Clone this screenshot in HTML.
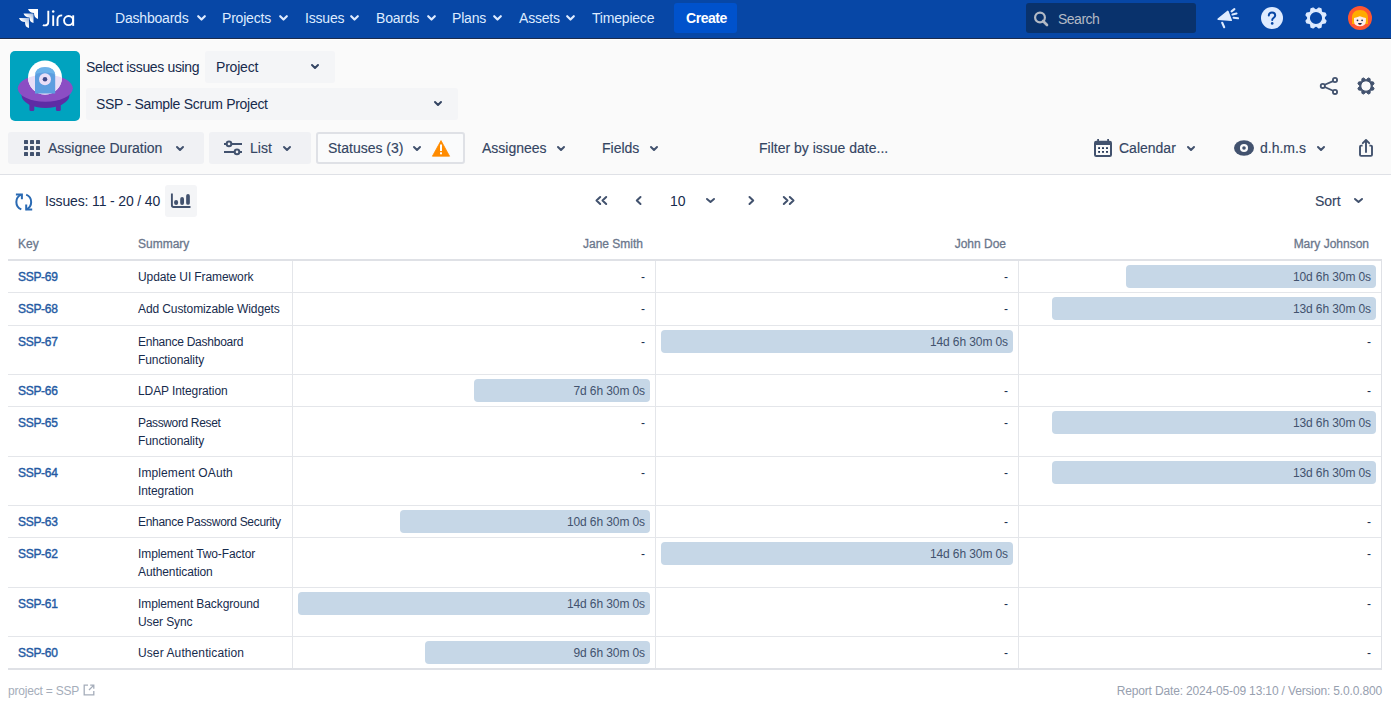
<!DOCTYPE html>
<html><head><meta charset="utf-8">
<style>
*{box-sizing:border-box;margin:0;padding:0}
html,body{width:1391px;height:704px;overflow:hidden;background:#fff;font-family:"Liberation Sans",sans-serif;color:#172b4d}
.a{position:absolute;white-space:nowrap}
#nav{position:absolute;left:0;top:0;width:1391px;height:38px;background:#0747a6}
#navline{position:absolute;left:0;top:38px;width:1391px;height:1px;background:#1d2c4c}
#hdr{position:absolute;left:0;top:39px;width:1391px;height:135px;background:#fafafa;border-top:1px solid #fff}
#tbline{position:absolute;left:0;top:174px;width:1391px;height:1px;background:#dfe1e6}
.nt{font-size:14px;color:#deebff;line-height:16px;letter-spacing:-0.2px}
.chev{position:absolute}
.btn{position:absolute;background:#f0f1f4;border-radius:3px}
.bt{font-size:14px;color:#344563;line-height:16px;-webkit-text-stroke:0.15px #344563}
svg{position:absolute;overflow:visible}
.th{font-size:12px;line-height:16px;color:#6b778c;-webkit-text-stroke:0.3px #6b778c}
.tk{font-size:12px;line-height:17px;color:#245aa3;letter-spacing:-0.3px;-webkit-text-stroke:0.4px #245aa3}
.ts{font-size:12px;line-height:17.5px;color:#172b4d;letter-spacing:-0.1px;white-space:nowrap}
.td{font-size:12px;line-height:17px;color:#172b4d}
.tb{font-size:12px;line-height:17px;color:#42526e;letter-spacing:-0.1px}
.bar{height:23px;background:#c6d7e7;border-radius:4px}
.tf{font-size:12px;line-height:16px;color:#a5adba;letter-spacing:-0.2px}
</style></head><body>
<div id="nav"></div>
<div id="navline"></div>
<div id="hdr"></div>
<div id="tbline"></div>

<!-- NAV -->
<svg style="left:18px;top:8px" width="21" height="21" viewBox="0 0 21 21">
  <defs>
    <linearGradient id="lg1" x1="1" y1="0" x2="0" y2="1"><stop offset="0" stop-color="#fff" stop-opacity=".55"/><stop offset=".5" stop-color="#fff"/></linearGradient>
  </defs>
  <path d="M10 1 H20 V11 C17 10 16 8 16 5 C13 5 11 3.5 10 1Z" fill="#fff"/>
  <path d="M5.5 5.5 H15.5 V15 C12.5 14.5 11.5 12.5 11.5 9.5 C8.5 9.5 6.5 8 5.5 5.5Z" fill="url(#lg1)"/>
  <path d="M1 10 H11 V20 C8 19.5 7 17.5 7 14 C4 14 2 12.5 1 10Z" fill="url(#lg1)"/>
</svg>
<svg style="left:40px;top:8px" width="38" height="22" viewBox="0 0 38 22">
  <path d="M8.3 2.8 V13.4 Q8.3 17.4 4.6 17.4 Q3.6 17.4 2.9 17" fill="none" stroke="#fff" stroke-width="1.9"/>
  <circle cx="13.2" cy="3.4" r="1.25" fill="#fff"/>
  <path d="M13.2 7.3 V17.9" stroke="#fff" stroke-width="1.9"/>
  <path d="M17.5 17.9 V11.6 Q17.5 7.4 22.2 7.4" fill="none" stroke="#fff" stroke-width="1.9"/>
  <circle cx="28.6" cy="12.6" r="4.55" fill="none" stroke="#fff" stroke-width="1.9"/>
  <path d="M33.2 7.3 V17.9" stroke="#fff" stroke-width="1.9"/>
</svg>

<div class="a nt" style="left:115px;top:10px">Dashboards</div>
<div class="a nt" style="left:222px;top:10px">Projects</div>
<div class="a nt" style="left:305px;top:10px">Issues</div>
<div class="a nt" style="left:376px;top:10px">Boards</div>
<div class="a nt" style="left:452px;top:10px">Plans</div>
<div class="a nt" style="left:519px;top:10px">Assets</div>
<div class="a nt" style="left:592px;top:10px">Timepiece</div>
<svg style="left:197px;top:15px" width="9" height="6" viewBox="0 0 9 6"><path d="M1.2 1.2 L4.5 4.5 L7.8 1.2" fill="none" stroke="#deebff" stroke-width="2.2" stroke-linecap="round" stroke-linejoin="round"/></svg>
<svg style="left:279px;top:15px" width="9" height="6" viewBox="0 0 9 6"><path d="M1.2 1.2 L4.5 4.5 L7.8 1.2" fill="none" stroke="#deebff" stroke-width="2.2" stroke-linecap="round" stroke-linejoin="round"/></svg>
<svg style="left:350px;top:15px" width="9" height="6" viewBox="0 0 9 6"><path d="M1.2 1.2 L4.5 4.5 L7.8 1.2" fill="none" stroke="#deebff" stroke-width="2.2" stroke-linecap="round" stroke-linejoin="round"/></svg>
<svg style="left:427px;top:15px" width="9" height="6" viewBox="0 0 9 6"><path d="M1.2 1.2 L4.5 4.5 L7.8 1.2" fill="none" stroke="#deebff" stroke-width="2.2" stroke-linecap="round" stroke-linejoin="round"/></svg>
<svg style="left:493px;top:15px" width="9" height="6" viewBox="0 0 9 6"><path d="M1.2 1.2 L4.5 4.5 L7.8 1.2" fill="none" stroke="#deebff" stroke-width="2.2" stroke-linecap="round" stroke-linejoin="round"/></svg>
<svg style="left:566px;top:15px" width="9" height="6" viewBox="0 0 9 6"><path d="M1.2 1.2 L4.5 4.5 L7.8 1.2" fill="none" stroke="#deebff" stroke-width="2.2" stroke-linecap="round" stroke-linejoin="round"/></svg>

<div class="a" style="left:674px;top:3px;width:63px;height:30px;background:#0052cc;border-radius:3px"></div>
<div class="a" style="left:686px;top:10px;font-size:14px;line-height:16px;color:#fff;font-weight:bold;letter-spacing:-0.45px">Create</div>

<div class="a" style="left:1026px;top:3px;width:170px;height:30px;background:#09326c;border-radius:3px"></div>
<svg style="left:1033px;top:10.5px" width="16" height="16" viewBox="0 0 16 16"><circle cx="7" cy="6.5" r="4.9" fill="none" stroke="#b3bac5" stroke-width="2.2"/><path d="M10 10 L14 14" stroke="#b3bac5" stroke-width="2.6" stroke-linecap="round"/></svg>
<div class="a" style="left:1058px;top:11px;font-size:14px;line-height:16px;color:#b3bac5;letter-spacing:-0.5px">Search</div>


<!-- right nav icons -->
<svg style="left:1213px;top:4px" width="30" height="30" viewBox="0 0 30 30">
  <path d="M5.2 15.2 L14.8 7.4 L18.2 16.3 Z" fill="#deebff" stroke="#deebff" stroke-width="1.6" stroke-linejoin="round"/>
  <path d="M9.2 18.8 L11.2 23.2" stroke="#deebff" stroke-width="2.1" stroke-linecap="round"/>
  <path d="M18.6 7.4 L21.4 5.2 M19.5 10.4 L23.5 9.5 M20.6 13.7 L25 14.3" stroke="#deebff" stroke-width="2.1" stroke-linecap="round"/>
</svg>
<svg style="left:1261px;top:7px" width="22" height="22" viewBox="0 0 22 22">
  <circle cx="11" cy="11" r="11" fill="#deebff"/>
  <path d="M7.8 8.6 C7.8 6.6 9.3 5.4 11 5.4 C12.8 5.4 14.2 6.6 14.2 8.4 C14.2 10.6 11.2 10.8 11.2 13" fill="none" stroke="#0747a6" stroke-width="2" stroke-linecap="round"/>
  <circle cx="11.2" cy="16.4" r="1.3" fill="#0747a6"/>
</svg>
<svg style="left:1305px;top:7px" width="22" height="22" viewBox="0 0 22 22"><path fill="#deebff" fill-rule="evenodd" stroke="#deebff" stroke-width="1.2" stroke-linejoin="round" d="M11.76 2.73 L13.90 1.01 L16.02 1.89 L16.31 4.62 L17.38 5.69 L20.11 5.98 L20.99 8.10 L19.27 10.24 L19.27 11.76 L20.99 13.90 L20.11 16.02 L17.38 16.31 L16.31 17.38 L16.02 20.11 L13.90 20.99 L11.76 19.27 L10.24 19.27 L8.10 20.99 L5.98 20.11 L5.69 17.38 L4.62 16.31 L1.89 16.02 L1.01 13.90 L2.73 11.76 L2.73 10.24 L1.01 8.10 L1.89 5.98 L4.62 5.69 L5.69 4.62 L5.98 1.89 L8.10 1.01 L10.24 2.73 Z M17.70 11.00 A6.7 6.7 0 1 0 4.30 11.00 A6.7 6.7 0 1 0 17.70 11.00 Z"/></svg>
<svg style="left:1348px;top:6px" width="24" height="24" viewBox="0 0 24 24">
  <circle cx="12" cy="12" r="12" fill="#ff5630"/>
  <path d="M4 12.5 C3.6 7 7 4 12 4 C17 4 20.4 7 20 12.5 L20 18 L4 18Z" fill="#ffab00"/>
  <path d="M6 12 Q9 11.5 11.9 10.3 Q14.8 11.5 17.9 12 L17.9 15.5 Q17.5 20.3 11.9 20.3 Q6.3 20.3 6 15.5Z" fill="#ffebe6"/>
  <circle cx="9.5" cy="14.3" r=".9" fill="#172b4d"/><circle cx="14.1" cy="14.3" r=".9" fill="#172b4d"/>
  <path d="M10 17 H13.9 Q13.5 18.9 11.95 18.9 Q10.4 18.9 10 17Z" fill="#172b4d"/>
  <path d="M10.8 18.4 Q11.95 17.6 13.1 18.4 Q12.5 18.9 11.95 18.9 Q11.4 18.9 10.8 18.4Z" fill="#de350b"/>
</svg>

<!-- project header -->
<svg style="left:10px;top:51px" width="70" height="70" viewBox="0 0 70 70">
  <defs><clipPath id="sauc"><ellipse cx="35.3" cy="37.3" rx="27.5" ry="13.5"/></clipPath></defs>
  <rect width="70" height="70" rx="5" fill="#00a3bf"/>
  <ellipse cx="35.5" cy="44" rx="24" ry="13" fill="#5e2ca5"/>
  <rect x="19.4" y="49" width="4.9" height="11" rx="1.5" fill="#5e2ca5"/>
  <rect x="45.9" y="49" width="4.9" height="11" rx="1.5" fill="#5e2ca5"/>
  <ellipse cx="35.3" cy="37.3" rx="27.5" ry="13.5" fill="#8b4ec4"/>
  <circle cx="35" cy="26.5" r="17" fill="#fff"/>
  <circle cx="35" cy="26.5" r="17" fill="#e9def7" clip-path="url(#sauc)"/>
  <path d="M25 42.4 L25 25 Q25 16.3 35 16.3 Q45.2 16.3 45.2 25 L45.2 42.4Z" fill="#5d9ee0"/>
  <path d="M25 25 Q25 16.3 35 16.3 Q45.2 16.3 45.2 25 L45.2 23 Q35 20 25 23Z" fill="#6cb3ea"/>
  <circle cx="35" cy="28.2" r="6" fill="#e9def7"/>
  <circle cx="35" cy="28.2" r="2.3" fill="#3d4a8a"/>
</svg>
<div class="a" style="left:86px;top:59px;font-size:14px;line-height:16px;color:#172b4d;letter-spacing:-0.35px">Select issues using</div>
<div class="a" style="left:205px;top:51px;width:130px;height:32px;background:#f4f5f7;border-radius:3px"></div>
<div class="a" style="left:216px;top:59px;font-size:14px;line-height:16px;color:#172b4d;letter-spacing:-0.2px">Project</div>
<svg style="left:311px;top:64px" width="8" height="5" viewBox="0 0 8 5"><path d="M1 1 L4 4 L7 1" fill="none" stroke="#344563" stroke-width="2" stroke-linecap="round" stroke-linejoin="round"/></svg>
<div class="a" style="left:86px;top:88px;width:372px;height:32px;background:#f4f5f7;border-radius:3px"></div>
<div class="a" style="left:96px;top:96px;font-size:14px;line-height:16px;color:#172b4d;letter-spacing:-0.3px">SSP - Sample Scrum Project</div>
<svg style="left:434px;top:101px" width="8" height="5" viewBox="0 0 8 5"><path d="M1 1 L4 4 L7 1" fill="none" stroke="#344563" stroke-width="2" stroke-linecap="round" stroke-linejoin="round"/></svg>

<svg style="left:1312px;top:68px" width="36" height="36" viewBox="0 0 36 36">
  <circle cx="23" cy="12" r="2.1" fill="none" stroke="#42526e" stroke-width="1.8"/>
  <circle cx="10.8" cy="17.9" r="2.1" fill="none" stroke="#42526e" stroke-width="1.8"/>
  <circle cx="23" cy="23.9" r="2.1" fill="none" stroke="#42526e" stroke-width="1.8"/>
  <path d="M12.7 16.8 L21.1 13.1 M12.7 19 L21.1 22.8" stroke="#42526e" stroke-width="1.8"/>
</svg>
<svg style="left:1356.6px;top:76.6px" width="18" height="18" viewBox="0 0 18 18"><path fill="#42526e" fill-rule="evenodd" stroke="#42526e" stroke-width="1" stroke-linejoin="round" d="M9.60 2.43 L11.34 0.93 L13.05 1.64 L13.22 3.93 L14.07 4.78 L16.36 4.95 L17.07 6.66 L15.57 8.40 L15.57 9.60 L17.07 11.34 L16.36 13.05 L14.07 13.22 L13.22 14.07 L13.05 16.36 L11.34 17.07 L9.60 15.57 L8.40 15.57 L6.66 17.07 L4.95 16.36 L4.78 14.07 L3.93 13.22 L1.64 13.05 L0.93 11.34 L2.43 9.60 L2.43 8.40 L0.93 6.66 L1.64 4.95 L3.93 4.78 L4.78 3.93 L4.95 1.64 L6.66 0.93 L8.40 2.43 Z M14.20 9.00 A5.2 5.2 0 1 0 3.80 9.00 A5.2 5.2 0 1 0 14.20 9.00 Z"/></svg>


<!-- toolbar -->
<div class="btn" style="left:8px;top:132px;width:196px;height:32px"></div>
<svg style="left:24px;top:140px" width="16" height="16" viewBox="0 0 16 16" fill="#42526e">
<rect x="0" y="0" width="4" height="4" rx=".6"/><rect x="6" y="0" width="4" height="4" rx=".6"/><rect x="12" y="0" width="4" height="4" rx=".6"/>
<rect x="0" y="6" width="4" height="4" rx=".6"/><rect x="6" y="6" width="4" height="4" rx=".6"/><rect x="12" y="6" width="4" height="4" rx=".6"/>
<rect x="0" y="12" width="4" height="4" rx=".6"/><rect x="6" y="12" width="4" height="4" rx=".6"/><rect x="12" y="12" width="4" height="4" rx=".6"/>
</svg>
<div class="a bt" style="left:48px;top:140px">Assignee Duration</div>
<svg class="tchev" style="left:176px;top:146px" width="8" height="5" viewBox="0 0 8 5"><path d="M1 1 L4 4 L7 1" fill="none" stroke="#42526e" stroke-width="2" stroke-linecap="round" stroke-linejoin="round"/></svg>

<div class="btn" style="left:209px;top:132px;width:102px;height:32px"></div>
<svg style="left:223px;top:139px" width="20" height="16" viewBox="0 0 20 16">
  <path d="M1 4.9 H3 M9 4.9 H19 M1 12.9 H11 M17 12.9 H19" stroke="#42526e" stroke-width="2"/>
  <circle cx="6" cy="4.9" r="2.3" fill="none" stroke="#42526e" stroke-width="2"/>
  <circle cx="14" cy="12.9" r="2.3" fill="none" stroke="#42526e" stroke-width="2"/>
</svg>
<div class="a bt" style="left:250px;top:140px">List</div>
<svg style="left:283px;top:146px" width="8" height="5" viewBox="0 0 8 5"><path d="M1 1 L4 4 L7 1" fill="none" stroke="#42526e" stroke-width="2" stroke-linecap="round" stroke-linejoin="round"/></svg>

<div class="a" style="left:316px;top:132px;width:149px;height:32px;border:2px solid #dfe1e6;border-radius:3px;background:#fafbfc"></div>
<div class="a bt" style="left:328px;top:140px">Statuses (3)</div>
<svg style="left:413px;top:146px" width="8" height="5" viewBox="0 0 8 5"><path d="M1 1 L4 4 L7 1" fill="none" stroke="#42526e" stroke-width="2" stroke-linecap="round" stroke-linejoin="round"/></svg>
<svg style="left:432px;top:140px" width="18" height="17" viewBox="0 0 18 17">
  <path d="M9 0.6 L17.6 16.2 L0.4 16.2 Z" fill="#ff8b00" stroke="#ff8b00" stroke-width=".8" stroke-linejoin="round"/>
  <rect x="8" y="4.5" width="2" height="6.5" fill="#fff"/><rect x="8" y="12.3" width="2" height="2" fill="#fff"/>
</svg>

<div class="a bt" style="left:482px;top:140px">Assignees</div>
<svg style="left:557px;top:146px" width="8" height="5" viewBox="0 0 8 5"><path d="M1 1 L4 4 L7 1" fill="none" stroke="#42526e" stroke-width="2" stroke-linecap="round" stroke-linejoin="round"/></svg>
<div class="a bt" style="left:602px;top:140px">Fields</div>
<svg style="left:650px;top:146px" width="8" height="5" viewBox="0 0 8 5"><path d="M1 1 L4 4 L7 1" fill="none" stroke="#42526e" stroke-width="2" stroke-linecap="round" stroke-linejoin="round"/></svg>
<div class="a bt" style="left:759px;top:140px">Filter by issue date...</div>

<svg style="left:1094px;top:139px" width="18" height="18" viewBox="0 0 18 18">
  <rect x="0" y="1.7" width="18" height="16.2" rx="2.2" fill="#42526e"/>
  <rect x="2" y="6" width="14" height="10" fill="#fafafa"/>
  <rect x="3.2" y="0" width="1.8" height="3" fill="#42526e"/><rect x="13.2" y="0" width="1.8" height="3" fill="#42526e"/>
  <g fill="#172b4d"><rect x="4.2" y="8.2" width="1.8" height="1.8"/><rect x="8.1" y="8.2" width="1.8" height="1.8"/><rect x="12.1" y="8.2" width="1.8" height="1.8"/>
  <rect x="4.2" y="12" width="1.8" height="1.8"/><rect x="8.1" y="12" width="1.8" height="1.8"/><rect x="12.1" y="12" width="1.8" height="1.8"/></g>
</svg>
<div class="a bt" style="left:1119px;top:140px">Calendar</div>
<svg style="left:1187px;top:146px" width="8" height="5" viewBox="0 0 8 5"><path d="M1 1 L4 4 L7 1" fill="none" stroke="#42526e" stroke-width="2" stroke-linecap="round" stroke-linejoin="round"/></svg>

<svg style="left:1234px;top:140px" width="20" height="16" viewBox="0 0 20 16">
  <ellipse cx="10" cy="8" rx="10" ry="7.8" fill="#42526e"/>
  <circle cx="10" cy="8" r="4.05" fill="#fafafa"/>
  <circle cx="10" cy="8" r="1.8" fill="#42526e"/>
</svg>
<div class="a bt" style="left:1260px;top:140px">d.h.m.s</div>
<svg style="left:1317px;top:146px" width="8" height="5" viewBox="0 0 8 5"><path d="M1 1 L4 4 L7 1" fill="none" stroke="#42526e" stroke-width="2" stroke-linecap="round" stroke-linejoin="round"/></svg>

<svg style="left:1358px;top:138px" width="16" height="20" viewBox="0 0 16 20">
  <path d="M4.6 7.6 H3.1 Q2 7.6 2 8.7 V16.8 Q2 17.9 3.1 17.9 H12.9 Q14 17.9 14 16.8 V8.7 Q14 7.6 12.9 7.6 H11.4" fill="none" stroke="#42526e" stroke-width="1.9"/>
  <path d="M8 14 V2.2 M4.8 5.2 L8 2 L11.2 5.2" fill="none" stroke="#42526e" stroke-width="1.9" stroke-linecap="round" stroke-linejoin="round"/>
</svg>

<!-- issues bar -->
<svg style="left:14px;top:192px" width="20" height="20" viewBox="0 0 20 20">
  <path d="M7.3 17.4 A8 8 0 0 1 7.3 2.6" fill="none" stroke="#2a6ab3" stroke-width="2"/>
  <path d="M1.9 2.5 H7.9 V7.2" fill="none" stroke="#2a6ab3" stroke-width="2"/>
  <path d="M12.2 2.6 A8 8 0 0 1 12.2 17.4" fill="none" stroke="#2a6ab3" stroke-width="2"/>
  <path d="M18.2 17.4 H12.2 V12.6" fill="none" stroke="#2a6ab3" stroke-width="2"/>
</svg>
<div class="a" style="left:45px;top:193px;font-size:14px;line-height:16px;color:#172b4d;letter-spacing:-0.15px">Issues: 11 - 20 / 40</div>
<div class="a" style="left:165px;top:185px;width:32px;height:32px;background:#f4f5f7;border-radius:3px"></div>
<svg style="left:165px;top:185px" width="32" height="32" viewBox="0 0 32 32">
  <path d="M6.9 8.6 V20.3 Q6.9 22 8.6 22 H25.5" fill="none" stroke="#42526e" stroke-width="1.9"/>
  <path d="M11.1 16.9 V18" stroke="#42526e" stroke-width="4" stroke-linecap="round"/>
  <path d="M17.1 14 V18" stroke="#42526e" stroke-width="3.8" stroke-linecap="round"/>
  <path d="M23 10.9 V18" stroke="#42526e" stroke-width="3.7" stroke-linecap="round"/>
</svg>

<!-- pagination -->
<svg style="left:595px;top:196px" width="13" height="9" viewBox="0 0 13 9"><path d="M5.2 1 L1.5 4.5 L5.2 8 M11.2 1 L7.5 4.5 L11.2 8" fill="none" stroke="#42526e" stroke-width="2" stroke-linecap="round" stroke-linejoin="round"/></svg>
<svg style="left:635px;top:196px" width="8" height="9" viewBox="0 0 8 9"><path d="M5.5 1 L1.8 4.5 L5.5 8" fill="none" stroke="#42526e" stroke-width="2" stroke-linecap="round" stroke-linejoin="round"/></svg>
<div class="a" style="left:670px;top:193px;font-size:14px;line-height:16px;color:#172b4d">10</div>
<svg style="left:706px;top:198px" width="9" height="5" viewBox="0 0 9 5"><path d="M1 1 L4.5 4 L8 1" fill="none" stroke="#42526e" stroke-width="2" stroke-linecap="round" stroke-linejoin="round"/></svg>
<svg style="left:747px;top:196px" width="8" height="9" viewBox="0 0 8 9"><path d="M2.5 1 L6.2 4.5 L2.5 8" fill="none" stroke="#42526e" stroke-width="2" stroke-linecap="round" stroke-linejoin="round"/></svg>
<svg style="left:782px;top:196px" width="13" height="9" viewBox="0 0 13 9"><path d="M1.8 1 L5.5 4.5 L1.8 8 M7.8 1 L11.5 4.5 L7.8 8" fill="none" stroke="#42526e" stroke-width="2" stroke-linecap="round" stroke-linejoin="round"/></svg>

<div class="a bt" style="left:1315px;top:193px">Sort</div>
<svg style="left:1354px;top:198px" width="9" height="5" viewBox="0 0 9 5"><path d="M1 1 L4.5 4 L8 1" fill="none" stroke="#42526e" stroke-width="2" stroke-linecap="round" stroke-linejoin="round"/></svg>


<!-- table -->
<div class="a th" style="left:18px;top:236px">Key</div>
<div class="a th" style="left:138px;top:236px">Summary</div>
<div class="a th" style="right:748px;top:236px">Jane Smith</div>
<div class="a th" style="right:385px;top:236px">John Doe</div>
<div class="a th" style="right:22px;top:236px">Mary Johnson</div>
<div class="a" style="left:8px;top:259px;width:1374px;height:2px;background:#dfe1e6"></div>
<div class="a" style="left:8px;top:292px;width:1374px;height:1px;background:#e4e6ea"></div>
<div class="a" style="left:8px;top:325px;width:1374px;height:1px;background:#e4e6ea"></div>
<div class="a" style="left:8px;top:374px;width:1374px;height:1px;background:#e4e6ea"></div>
<div class="a" style="left:8px;top:406px;width:1374px;height:1px;background:#e4e6ea"></div>
<div class="a" style="left:8px;top:456px;width:1374px;height:1px;background:#e4e6ea"></div>
<div class="a" style="left:8px;top:505px;width:1374px;height:1px;background:#e4e6ea"></div>
<div class="a" style="left:8px;top:537px;width:1374px;height:1px;background:#e4e6ea"></div>
<div class="a" style="left:8px;top:587px;width:1374px;height:1px;background:#e4e6ea"></div>
<div class="a" style="left:8px;top:636px;width:1374px;height:1px;background:#e4e6ea"></div>
<div class="a" style="left:8px;top:668px;width:1374px;height:2px;background:#dfe1e6"></div>
<div class="a" style="left:292px;top:261px;width:1px;height:407px;background:#e4e6ea"></div>
<div class="a" style="left:655px;top:261px;width:1px;height:407px;background:#e4e6ea"></div>
<div class="a" style="left:1018px;top:261px;width:1px;height:407px;background:#e4e6ea"></div>
<div class="a" style="left:1381px;top:259px;width:1px;height:411px;background:#dfe1e6"></div>
<div class="a tk" style="left:18px;top:269px">SSP-69</div>
<div class="a ts" style="left:138px;top:269px">Update UI Framework</div>
<div class="a td" style="right:746px;top:269px">-</div>
<div class="a td" style="right:383px;top:269px">-</div>
<div class="a bar" style="left:1126px;top:265px;width:250px"></div>
<div class="a tb" style="right:20px;top:269px">10d 6h 30m 0s</div>
<div class="a tk" style="left:18px;top:301px">SSP-68</div>
<div class="a ts" style="left:138px;top:301px">Add Customizable Widgets</div>
<div class="a td" style="right:746px;top:301px">-</div>
<div class="a td" style="right:383px;top:301px">-</div>
<div class="a bar" style="left:1052px;top:297px;width:324px"></div>
<div class="a tb" style="right:20px;top:301px">13d 6h 30m 0s</div>
<div class="a tk" style="left:18px;top:334px">SSP-67</div>
<div class="a ts" style="left:138px;top:334px"><span style="letter-spacing:-0.25px">Enhance Dashboard</span><br>Functionality</div>
<div class="a td" style="right:746px;top:334px">-</div>
<div class="a bar" style="left:661px;top:330px;width:352px"></div>
<div class="a tb" style="right:383px;top:334px">14d 6h 30m 0s</div>
<div class="a td" style="right:20px;top:334px">-</div>
<div class="a tk" style="left:18px;top:383px">SSP-66</div>
<div class="a ts" style="left:138px;top:383px">LDAP Integration</div>
<div class="a bar" style="left:474px;top:379px;width:176px"></div>
<div class="a tb" style="right:746px;top:383px">7d 6h 30m 0s</div>
<div class="a td" style="right:383px;top:383px">-</div>
<div class="a td" style="right:20px;top:383px">-</div>
<div class="a tk" style="left:18px;top:415px">SSP-65</div>
<div class="a ts" style="left:138px;top:415px"><span style="letter-spacing:-0.35px">Password Reset</span><br>Functionality</div>
<div class="a td" style="right:746px;top:415px">-</div>
<div class="a td" style="right:383px;top:415px">-</div>
<div class="a bar" style="left:1052px;top:411px;width:324px"></div>
<div class="a tb" style="right:20px;top:415px">13d 6h 30m 0s</div>
<div class="a tk" style="left:18px;top:465px">SSP-64</div>
<div class="a ts" style="left:138px;top:465px"><span style="letter-spacing:0.1px">Implement OAuth</span><br>Integration</div>
<div class="a td" style="right:746px;top:465px">-</div>
<div class="a td" style="right:383px;top:465px">-</div>
<div class="a bar" style="left:1052px;top:461px;width:324px"></div>
<div class="a tb" style="right:20px;top:465px">13d 6h 30m 0s</div>
<div class="a tk" style="left:18px;top:514px">SSP-63</div>
<div class="a ts" style="left:138px;top:514px;letter-spacing:-0.3px">Enhance Password Security</div>
<div class="a bar" style="left:400px;top:510px;width:250px"></div>
<div class="a tb" style="right:746px;top:514px">10d 6h 30m 0s</div>
<div class="a td" style="right:383px;top:514px">-</div>
<div class="a td" style="right:20px;top:514px">-</div>
<div class="a tk" style="left:18px;top:546px">SSP-62</div>
<div class="a ts" style="left:138px;top:546px">Implement Two-Factor<br>Authentication</div>
<div class="a td" style="right:746px;top:546px">-</div>
<div class="a bar" style="left:661px;top:542px;width:352px"></div>
<div class="a tb" style="right:383px;top:546px">14d 6h 30m 0s</div>
<div class="a td" style="right:20px;top:546px">-</div>
<div class="a tk" style="left:18px;top:596px">SSP-61</div>
<div class="a ts" style="left:138px;top:596px">Implement Background<br>User Sync</div>
<div class="a bar" style="left:298px;top:592px;width:352px"></div>
<div class="a tb" style="right:746px;top:596px">14d 6h 30m 0s</div>
<div class="a td" style="right:383px;top:596px">-</div>
<div class="a td" style="right:20px;top:596px">-</div>
<div class="a tk" style="left:18px;top:645px">SSP-60</div>
<div class="a ts" style="left:138px;top:645px"><span style="letter-spacing:0.1px">User Authentication</span></div>
<div class="a bar" style="left:425px;top:641px;width:225px"></div>
<div class="a tb" style="right:746px;top:645px">9d 6h 30m 0s</div>
<div class="a td" style="right:383px;top:645px">-</div>
<div class="a td" style="right:20px;top:645px">-</div>
<div class="a tf" style="left:8px;top:683px">project = SSP</div>
<svg style="left:83px;top:684px" width="12" height="12" viewBox="0 0 12 12"><path d="M5 1.2 H1.2 V10.8 H10.8 V7" fill="none" stroke="#a5adba" stroke-width="1.3"/><path d="M6 6 L10.6 1.4 M7.2 1.2 H10.8 V4.8" fill="none" stroke="#a5adba" stroke-width="1.3"/></svg>
<div class="a tf" style="right:9px;top:683px;color:#97a0af;letter-spacing:-0.15px">Report Date: 2024-05-09 13:10 / Version: 5.0.0.800</div>
</body></html>
